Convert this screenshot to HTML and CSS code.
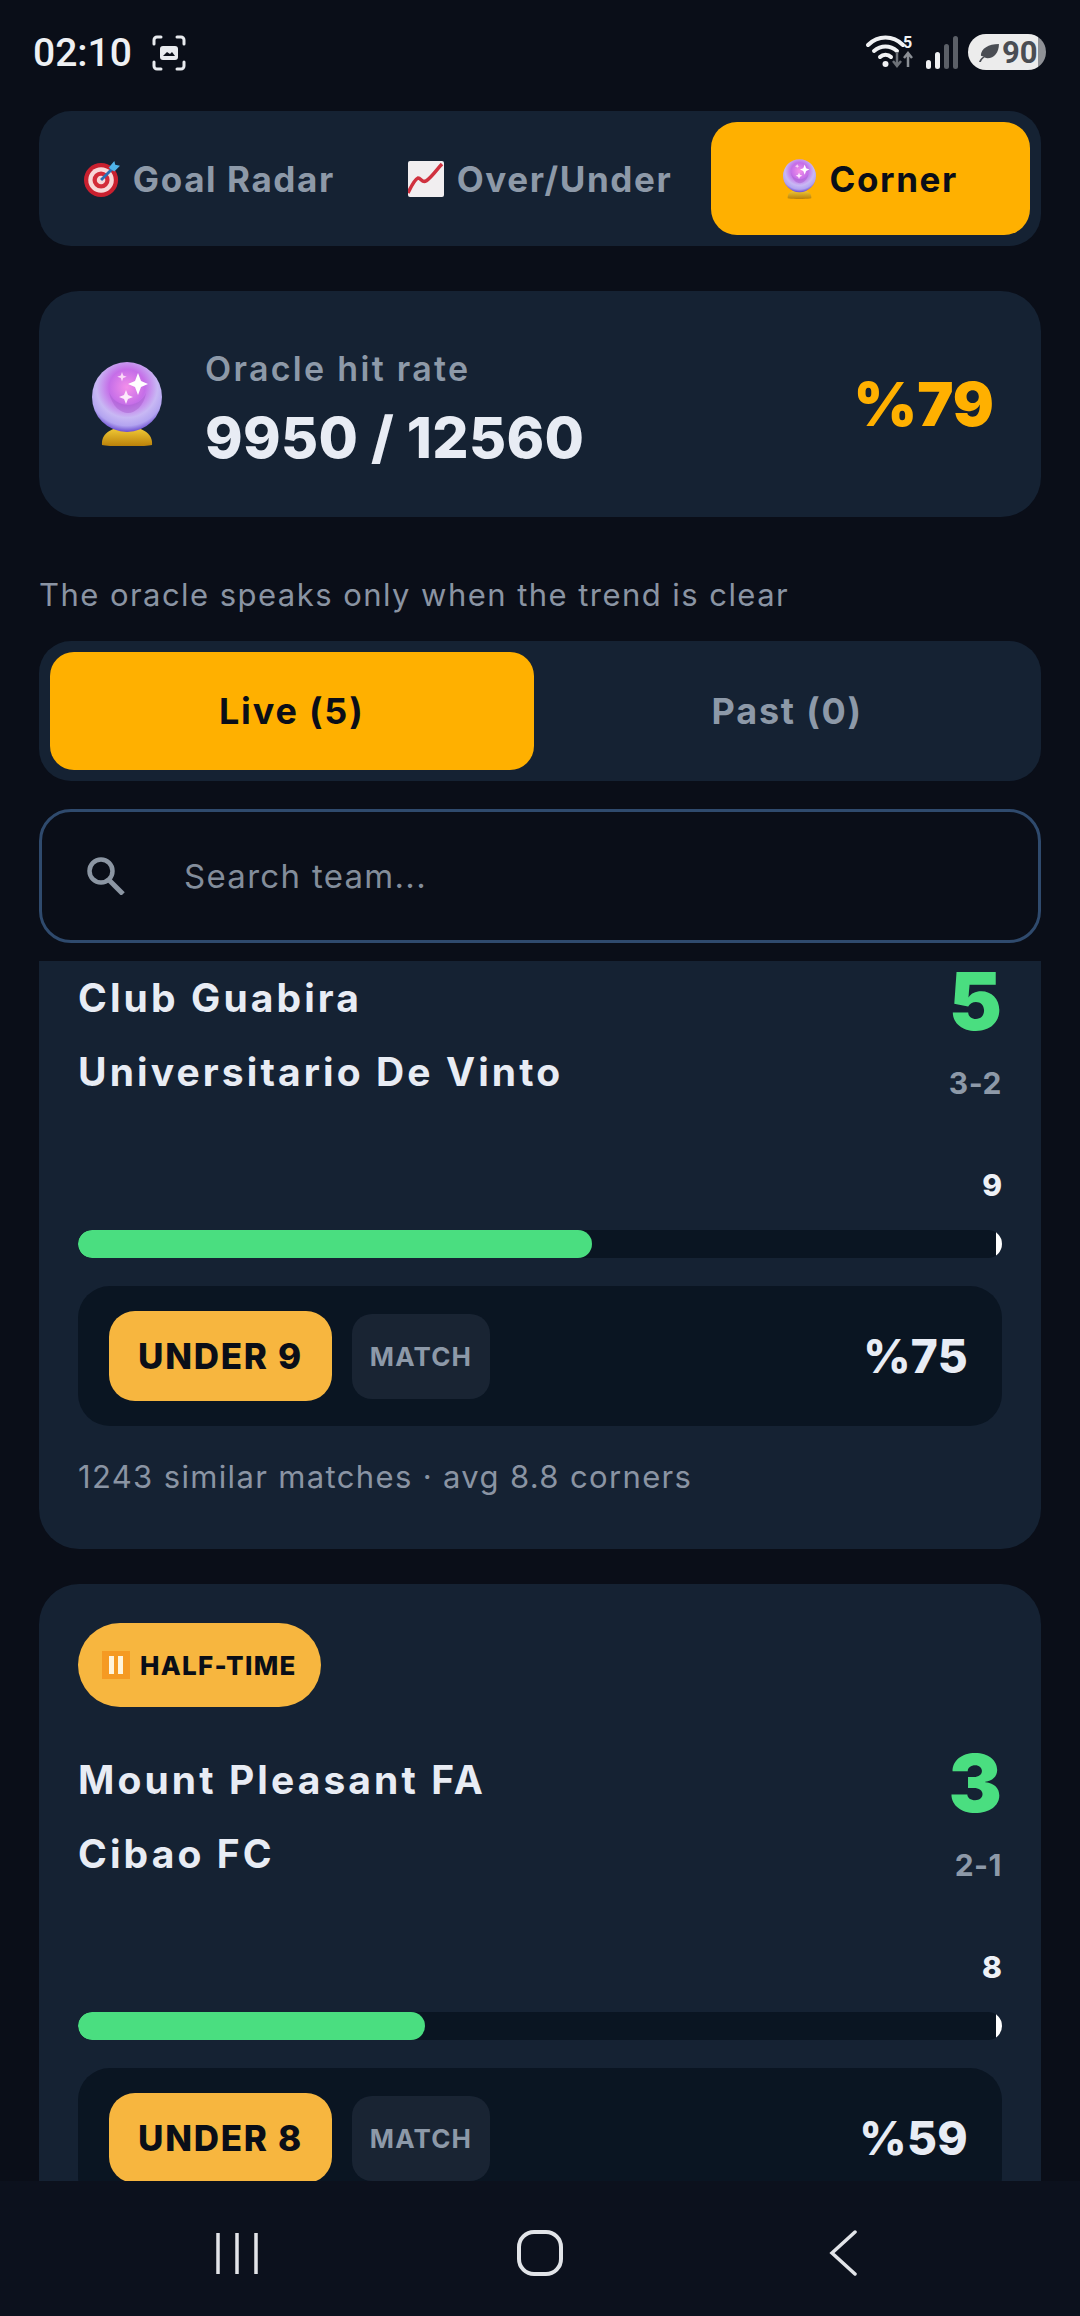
FILE: index.html

```html
<!DOCTYPE html>
<html lang="en">
<head>
    <meta charset="UTF-8">
    <title>Corner Oracle</title>
    <link rel="stylesheet" href="styles.css">
</head>
<body>
    <svg class="defs" width="0" height="0" aria-hidden="true">
        <defs>
            <radialGradient id="ballFill" cx="50%" cy="36%" r="64%">
                <stop offset="0" stop-color="#f48fea"/>
                <stop offset="0.4" stop-color="#c56ee8"/>
                <stop offset="0.68" stop-color="#c8b8f4"/>
                <stop offset="0.86" stop-color="#b3a4f0"/>
                <stop offset="1" stop-color="#6a4cd0"/>
            </radialGradient>
            <linearGradient id="ballBase" x1="0" y1="0" x2="0" y2="1">
                <stop offset="0" stop-color="#f5cf3a"/>
                <stop offset="1" stop-color="#b97f08"/>
            </linearGradient>
            <symbol id="crystal" viewBox="0 0 70 84">
                <path d="M10 83c-1-9 6-18 25-18s26 9 25 18c-8 2-42 2-50 0z" fill="url(#ballBase)"/>
                <circle cx="35" cy="35" r="35" fill="url(#ballFill)"/>
                <path d="M17 30c3 15 12 21 19 21s16-7 18-20c-3 7-10 12-18 12s-16-5-19-13z" fill="#a85fd0" opacity="0.5"/>
                <path d="M46 11l3 8 7 3-7 3-3 8-3-8-7-3 7-3z" fill="#fff"/>
                <path d="M34 28l2 5 5 2-5 2-2 5-2-5-5-2 5-2z" fill="#fde9fb"/>
                <path d="M30 10l1.200 3.500 3.500 1.200-3.500 1.200-1.200 3.500-1.200-3.500-3.500-1.200 3.500-1.200z" fill="#fbd9f8"/>
            </symbol>
        </defs>
    </svg>

    <header class="status-bar">
        <div class="status-left">
            <span class="clock">02:10</span>
            <svg class="shot-icon" viewBox="0 0 34 36" fill="none" stroke="#e8eaee" stroke-width="3" stroke-linecap="round">
                <path d="M2 9V5a3 3 0 0 1 3-3h4M25 2h4a3 3 0 0 1 3 3v4M32 27v4a3 3 0 0 1-3 3h-4M9 34H5a3 3 0 0 1-3-3v-4"/>
                <rect x="8" y="11" width="18" height="14" rx="3" fill="#e8eaee" stroke="none"/>
                <path d="M11 21l4-4 3 2 2-2 3 4z" fill="#0a0e18" stroke="none"/>
            </svg>
        </div>
        <div class="status-right">
            <svg class="net-icon" viewBox="0 0 50 36">
                <g fill="none" stroke="#f0f1f3" stroke-width="4" stroke-linecap="round">
                    <path d="M2 11c10-10 25-10 35 0"/>
                    <path d="M8 17c7-6 16-6 23 0"/>
                    <path d="M14 23c3-3 8-3 11 0"/>
                </g>
                <circle cx="19.500" cy="30" r="3" fill="#f0f1f3"/>
                <text class="net-num" x="37" y="14">5</text>
                <path d="M31 18v13m-4-4l4 5 4-5" fill="none" stroke="#6d7178" stroke-width="2.500"/>
                <path d="M42 33V20m-4 4l4-5 4 5" fill="none" stroke="#8b8f95" stroke-width="2.500"/>
            </svg>
            <svg class="signal-icon" viewBox="0 0 32 33">
                <rect x="0" y="24" width="5" height="9" rx="2.500" fill="#f0f1f3"/>
                <rect x="9" y="16" width="5" height="17" rx="2.500" fill="#f0f1f3"/>
                <rect x="18" y="8" width="5" height="25" rx="2.500" fill="#5b5f67"/>
                <rect x="27" y="0" width="5" height="33" rx="2.500" fill="#5b5f67"/>
            </svg>
            <div class="battery">
                <svg class="leaf" viewBox="0 0 24 20"><path d="M2 20c1-3 3-5 5-6-2 0-3 0-3-1C4 6 12 1 23 1c0 9-5 15-12 15-2 0-3-1-3-1-2 1-3 3-4 5z" fill="#4a4d53"/></svg>
                <span class="battery-num">90</span>
            </div>
        </div>
    </header>

    <main class="screen">
        <nav class="tabs">
            <button class="tab">
                <svg class="tab-emoji" viewBox="0 0 38 38">
                    <circle cx="18" cy="20" r="18" fill="#c9202f"/>
                    <circle cx="18" cy="20" r="13.500" fill="#f7d8d8"/>
                    <circle cx="18" cy="20" r="9" fill="#d32c39"/>
                    <circle cx="18" cy="20" r="4.500" fill="#f7d8d8"/>
                    <path d="M18 20L32 6" stroke="#2a6fb5" stroke-width="3"/>
                    <path d="M26 7l6-7 1 4 5 1-6 6z" fill="#4fb3e8"/>
                </svg>
                Goal Radar
            </button>
            <button class="tab">
                <svg class="tab-emoji" viewBox="0 0 36 36">
                    <rect width="36" height="36" rx="2" fill="#f1eef0"/>
                    <path d="M0 32c3-6 6-13 10-15 3 0 4 5 8 3 6-4 11-12 16-17" fill="none" stroke="#d0313f" stroke-width="3.500"/>
                </svg>
                Over/Under
            </button>
            <button class="tab tab-active">
                <svg class="tab-emoji ball-small"><use href="#crystal"/></svg>
                Corner
            </button>
        </nav>

        <section class="hit-card">
            <svg class="ball-big"><use href="#crystal"/></svg>
            <div class="hit-text">
                <div class="hit-label">Oracle hit rate</div>
                <div class="hit-count">9950 / 12560</div>
            </div>
            <div class="hit-rate">%79</div>
        </section>

        <p class="tagline">The oracle speaks only when the trend is clear</p>

        <div class="segment">
            <button class="seg seg-active">Live (5)</button>
            <button class="seg">Past (0)</button>
        </div>

        <div class="search">
            <svg class="search-icon" viewBox="0 0 40 38" fill="none" stroke="#8c96a3" stroke-width="4.500">
                <circle cx="15" cy="14" r="11.500"/>
                <path d="M23 23l14 14" stroke-width="5"/>
            </svg>
            <span class="search-text">Search team...</span>
        </div>

        <div class="list">
            <article class="card card-clipped">
                <div class="teams">
                    <div class="names">
                        <div class="name">Club Guabira</div>
                        <div class="name">Universitario De Vinto</div>
                    </div>
                    <div class="score">
                        <div class="score-total">5</div>
                        <div class="score-split">3-2</div>
                    </div>
                </div>
                <div class="line-num">9</div>
                <div class="bar"><div class="bar-fill" style="width: 55.6%"></div><div class="bar-mark"></div></div>
                <div class="pick">
                    <span class="pick-main">UNDER 9</span>
                    <span class="pick-scope">MATCH</span>
                    <span class="pick-pct">%75</span>
                </div>
                <p class="note">1243 similar matches · avg 8.8 corners</p>
            </article>

            <article class="card">
                <div class="badge">
                    <svg class="pause" viewBox="0 0 28 28">
                        <rect width="28" height="28" fill="#f59a23"/>
                        <rect x="7" y="5" width="5" height="18" fill="#fff4dc"/>
                        <rect x="16" y="5" width="5" height="18" fill="#fff4dc"/>
                    </svg>
                    HALF-TIME
                </div>
                <div class="teams">
                    <div class="names">
                        <div class="name">Mount Pleasant FA</div>
                        <div class="name">Cibao FC</div>
                    </div>
                    <div class="score">
                        <div class="score-total">3</div>
                        <div class="score-split">2-1</div>
                    </div>
                </div>
                <div class="line-num">8</div>
                <div class="bar"><div class="bar-fill" style="width: 37.6%"></div><div class="bar-mark"></div></div>
                <div class="pick">
                    <span class="pick-main">UNDER 8</span>
                    <span class="pick-scope">MATCH</span>
                    <span class="pick-pct">%59</span>
                </div>
            </article>
        </div>
    </main>

    <footer class="nav-bar">
        <svg class="nav-icon" viewBox="0 0 46 46" fill="none" stroke="#e2e4e8" stroke-width="3.500">
            <path d="M4 3v41M23 3v41M42 3v41"/>
        </svg>
        <svg class="nav-icon" viewBox="0 0 46 46" fill="none" stroke="#e2e4e8" stroke-width="4">
            <rect x="2" y="2" width="42" height="42" rx="15"/>
        </svg>
        <svg class="nav-icon" viewBox="0 0 46 46" fill="none" stroke="#e2e4e8" stroke-width="3.500" stroke-linecap="round">
            <path d="M35 2L12 23l23 21"/>
        </svg>
    </footer>
</body>
</html>
```

FILE: styles.css

```css
* {
    box-sizing: border-box;
}
body {
    margin: 0;
    width: 1080px;
    height: 2316px;
    overflow: hidden;
    display: flex;
    flex-direction: column;
    background: #0a0e18;
    color: #e8ecf4;
    font-family: Inter, "Noto Sans", sans-serif;
}
button {
    font-family: inherit;
    border: none;
    background: none;
    padding: 0;
}
.defs {
    position: absolute;
}

/* status bar */
.status-bar {
    height: 111px;
    flex: none;
    padding: 34px 34px 0 33px;
    display: flex;
    justify-content: space-between;
    align-items: flex-start;
}
.status-left {
    display: flex;
    align-items: center;
    gap: 20px;
}
.clock {
    font-family: Roboto, sans-serif;
    font-size: 39px;
    font-weight: 500;
    line-height: 38px;
    color: #eef0f3;
    width: 99px;
}
.shot-icon {
    width: 34px;
    height: 36px;
}
.status-right {
    display: flex;
    align-items: center;
    gap: 10px;
}
.net-icon {
    width: 50px;
    height: 36px;
    overflow: visible;
}
.net-num {
    font-size: 16px;
    font-weight: 700;
    fill: #f0f1f3;
    font-family: Roboto, sans-serif;
}
.signal-icon {
    width: 32px;
    height: 33px;
}
.battery {
    width: 78px;
    height: 36px;
    border-radius: 18px;
    background: linear-gradient(90deg, #ececec 90%, #8f9196 90%);
    display: flex;
    align-items: center;
    gap: 2px;
    padding-left: 9px;
}
.leaf {
    width: 23px;
    height: 19px;
}
.battery-num {
    font-size: 31px;
    font-weight: 700;
    color: #4a4d53;
    font-family: Roboto, sans-serif;
}

/* main column */
.screen {
    flex: 1;
    min-height: 0;
    padding: 0 39px;
    display: flex;
    flex-direction: column;
}
.tabs {
    height: 135px;
    flex: none;
    padding: 11px;
    background: #152233;
    border-radius: 32px;
    display: grid;
    grid-template-columns: repeat(3, 1fr);
    gap: 12px;
}
.tab {
    display: flex;
    align-items: center;
    justify-content: center;
    gap: 13px;
    font-size: 35px;
    font-weight: 700;
    letter-spacing: 1.6px;
    color: #8d99a8;
    border-radius: 26px;
}
.tab-active {
    background: #ffb000;
    color: #0a0e18;
}
.tab-emoji {
    width: 36px;
    height: 36px;
    flex: none;
}
.ball-small {
    width: 33px;
    height: 40px;
}

.hit-card {
    height: 226px;
    flex: none;
    margin-top: 45px;
    padding: 0 47px 0 53px;
    background: #152233;
    border-radius: 40px;
    display: flex;
    align-items: center;
}
.ball-big {
    width: 70px;
    height: 84px;
    flex: none;
    margin-right: 43px;
}
.hit-text {
    flex: 1;
    padding-top: 10px;
}
.hit-label {
    font-size: 34px;
    font-weight: 600;
    letter-spacing: 2.3px;
    color: #8d99a8;
    line-height: 44px;
}
.hit-count {
    font-size: 57px;
    font-weight: 800;
    letter-spacing: 0.3px;
    color: #e8ecf4;
    line-height: 68px;
    margin-top: 13px;
}
.hit-rate {
    font-size: 61px;
    font-weight: 900;
    color: #ffb000;
}

.tagline {
    margin: 58px 0 26px;
    font-size: 31px;
    line-height: 40px;
    letter-spacing: 1.45px;
    font-weight: 400;
    color: #8a94a3;
}

.segment {
    height: 140px;
    flex: none;
    padding: 11px 12px 11px 11px;
    background: #152233;
    border-radius: 32px;
    display: grid;
    grid-template-columns: 1fr 1fr;
    gap: 12px;
}
.seg {
    font-size: 36px;
    font-weight: 700;
    letter-spacing: 1.8px;
    color: #8d99a8;
    border-radius: 24px;
}
.seg-active {
    background: #ffb000;
    color: #0a0e18;
}

.search {
    height: 134px;
    flex: none;
    margin-top: 28px;
    padding-left: 44px;
    border: 3px solid #2f4a6d;
    border-radius: 32px;
    display: flex;
    align-items: center;
    gap: 58px;
    background: #0a0e18;
}
.search-icon {
    width: 40px;
    height: 38px;
    flex: none;
}
.search-text {
    font-size: 33px;
    letter-spacing: 1.3px;
    color: #838d9b;
}

/* match list */
.list {
    flex: 1;
    min-height: 0;
    margin-top: 18px;
    overflow: hidden;
}
.card {
    background: #152233;
    border-radius: 40px;
    padding: 39px 39px 51px;
    margin-bottom: 35px;
}
.card-clipped {
    border-radius: 0 0 40px 40px;
    padding-top: 0;
}
.badge {
    width: 243px;
    height: 84px;
    margin-bottom: 36px;
    border-radius: 42px;
    background: #f7b63f;
    color: #0a0e18;
    font-size: 26px;
    font-weight: 800;
    letter-spacing: 1.3px;
    display: flex;
    align-items: center;
    gap: 10px;
    padding-left: 24px;
}
.pause {
    width: 28px;
    height: 28px;
    flex: none;
}
.teams {
    height: 152px;
    display: flex;
    justify-content: space-between;
}
.names {
    padding-top: 12px;
}
.name {
    font-size: 39px;
    line-height: 50px;
    font-weight: 700;
    letter-spacing: 3.1px;
    margin-bottom: 24px;
    color: #e8ecf4;
}
.score {
    text-align: right;
}
.score-total {
    font-size: 80px;
    line-height: 80px;
    font-weight: 900;
    color: #4ade80;
}
.score-split {
    font-size: 30px;
    line-height: 40px;
    font-weight: 700;
    letter-spacing: 0.5px;
    color: #8d99a8;
    margin-top: 22px;
}
.line-num {
    text-align: right;
    font-size: 30px;
    line-height: 36px;
    font-weight: 800;
    margin-top: 54px;
    color: #eef1f6;
}
.bar {
    height: 28px;
    margin-top: 27px;
    border-radius: 14px;
    background: #0a1522;
    overflow: hidden;
    position: relative;
}
.bar-fill {
    height: 100%;
    border-radius: 14px;
    background: #4ade80;
}
/* line marker sits on the right end of the bar */
.bar-mark {
    position: absolute;
    right: 0;
    top: 0;
    width: 6px;
    height: 28px;
    border-radius: 0 14px 14px 0;
    background: #fff;
}
.pick {
    height: 140px;
    margin-top: 28px;
    padding: 0 34px 0 31px;
    background: #0a1522;
    border-radius: 32px;
    display: flex;
    align-items: center;
    flex: none;
}
.pick-main {
    width: 223px;
    height: 90px;
    border-radius: 26px;
    background: #f7b63f;
    color: #0a0e18;
    font-size: 35px;
    font-weight: 800;
    letter-spacing: 1.7px;
    display: flex;
    align-items: center;
    justify-content: center;
    flex: none;
}
.pick-scope {
    width: 138px;
    height: 85px;
    margin-left: 20px;
    border-radius: 20px;
    background: #192433;
    color: #8d99a8;
    font-size: 26px;
    font-weight: 700;
    letter-spacing: 1.2px;
    display: flex;
    align-items: center;
    justify-content: center;
    flex: none;
}
.pick-pct {
    margin-left: auto;
    font-size: 46px;
    font-weight: 800;
    letter-spacing: 0.3px;
    color: #e8ecf4;
}
.note {
    margin: 30px 0 0;
    font-size: 31px;
    line-height: 42px;
    letter-spacing: 1.35px;
    color: #8a94a3;
}

/* android nav */
.nav-bar {
    height: 135px;
    flex: none;
    background: #0c111d;
    display: grid;
    grid-template-columns: repeat(3, 303px);
    justify-items: center;
    align-items: center;
    padding: 9px 0 0 85px;
}
.nav-icon {
    width: 46px;
    height: 46px;
}
```
